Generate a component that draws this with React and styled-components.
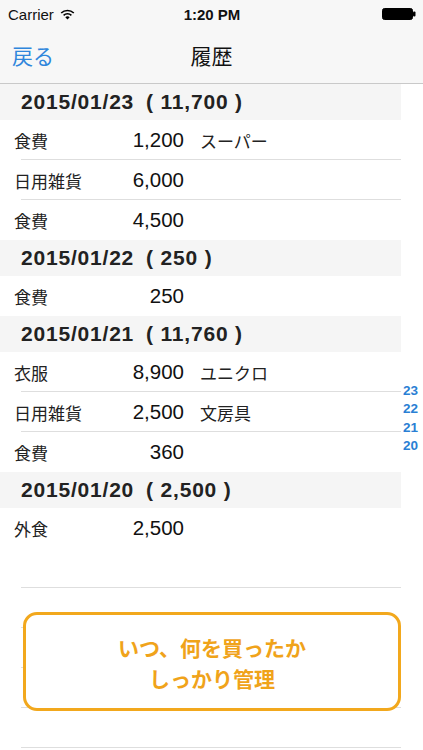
import React from "react";
import styled, { createGlobalStyle } from "styled-components";

const sections = [
  {
    date: "2015/01/23",
    total: "11,700",
    items: [
      { cat: "食費", amount: "1,200", memo: "スーパー" },
      { cat: "日用雑貨", amount: "6,000", memo: "" },
      { cat: "食費", amount: "4,500", memo: "" },
    ],
  },
  {
    date: "2015/01/22",
    total: "250",
    items: [{ cat: "食費", amount: "250", memo: "" }],
  },
  {
    date: "2015/01/21",
    total: "11,760",
    items: [
      { cat: "衣服", amount: "8,900", memo: "ユニクロ" },
      { cat: "日用雑貨", amount: "2,500", memo: "文房具" },
      { cat: "食費", amount: "360", memo: "" },
    ],
  },
  {
    date: "2015/01/20",
    total: "2,500",
    items: [{ cat: "外食", amount: "2,500", memo: "" }],
  },
];

const indexKeys = ["23", "22", "21", "20"];

export default function App() {
  return (
    <>
      <GlobalStyle />
      <Screen>
        <Header>
          <StatusBar>
            <Carrier>
              Carrier
              <svg width="15" height="11" viewBox="0 0 15 11">
                <path d="M7.5 10.5 L5.3 8.2 A3.2 3.2 0 0 1 9.7 8.2 Z" fill="#000" />
                <path d="M3.6 6.4 A5.6 5.6 0 0 1 11.4 6.4" stroke="#000" strokeWidth="1.6" fill="none" />
                <path d="M1.2 4 A9 9 0 0 1 13.8 4" stroke="#000" strokeWidth="1.6" fill="none" />
              </svg>
            </Carrier>
            <Time>1:20 PM</Time>
            <Battery>
              <svg width="34" height="12" viewBox="0 0 34 12">
                <rect x="0.5" y="0.5" width="30" height="11" rx="2" fill="#000" stroke="#000" />
                <rect x="31" y="3.5" width="2.5" height="5" rx="1" fill="#000" />
              </svg>
            </Battery>
          </StatusBar>
          <NavBar>
            <BackButton>戻る</BackButton>
            <NavTitle>履歴</NavTitle>
          </NavBar>
        </Header>

        <ListArea>
          <List>
            {sections.map((s) => (
              <React.Fragment key={s.date}>
                <SectionHeader>
                  <span>{s.date}</span>
                  <span>( {s.total} )</span>
                </SectionHeader>
                {s.items.map((it, i) => (
                  <Row key={i} $last={i === s.items.length - 1}>
                    <Category>{it.cat}</Category>
                    <Amount>{it.amount}</Amount>
                    <Memo>{it.memo}</Memo>
                  </Row>
                ))}
              </React.Fragment>
            ))}
            {[0, 1, 2, 3, 4].map((n) => (
              <Row key={"e" + n} />
            ))}
          </List>
          <IndexBar>
            {indexKeys.map((k) => (
              <IndexKey key={k}>{k}</IndexKey>
            ))}
          </IndexBar>
          <Callout>
            いつ、何を買ったか
            <br />
            しっかり管理
          </Callout>
        </ListArea>
      </Screen>
    </>
  );
}

const GlobalStyle = createGlobalStyle`
  body {
    margin: 0;
    background: #fff;
    font-family: "Liberation Sans", "Noto Sans CJK JP", sans-serif;
    color: #111;
  }
`;

const Screen = styled.div`
  width: 423px;
  height: 750px;
  overflow: hidden;
  display: flex;
  flex-direction: column;
`;

const Header = styled.div`
  background: #f7f7f7;
  border-bottom: 1px solid #c9c9c9;
  height: 84px;
  box-sizing: border-box;
  display: flex;
  flex-direction: column;
`;

const StatusBar = styled.div`
  height: 28px;
  display: grid;
  grid-template-columns: 1fr auto 1fr;
  align-items: center;
  padding: 0 7px 0 8px;
  font-size: 15px;
`;

const Carrier = styled.div`
  display: flex;
  align-items: center;
  gap: 6px;
  font-size: 15px;
`;

const Time = styled.div`
  font-weight: 700;
  font-size: 15px;
`;

const Battery = styled.div`
  display: flex;
  justify-content: flex-end;
`;

const NavBar = styled.div`
  flex: 1;
  display: grid;
  grid-template-columns: 1fr auto 1fr;
  align-items: center;
  padding: 0 12px 2px;
`;

const BackButton = styled.div`
  color: #2f86dc;
  font-size: 21px;
`;

const NavTitle = styled.div`
  font-size: 21px;
  color: #111;
`;

const ListArea = styled.div`
  flex: 1;
  position: relative;
  display: flex;
`;

const List = styled.div`
  width: 401px;
  display: flex;
  flex-direction: column;
`;

const SectionHeader = styled.div`
  height: 36px;
  flex-shrink: 0;
  background: #f5f5f5;
  display: flex;
  align-items: center;
  gap: 12px;
  padding-left: 21px;
  font-size: 21px;
  font-weight: 700;
  letter-spacing: 0.8px;
  color: #222;
`;

const Row = styled.div`
  height: 40px;
  flex-shrink: 0;
  display: flex;
  align-items: center;
  padding-left: 14px;
  background: ${(p) =>
    p.$last ? "none" : "linear-gradient(#dedede, #dedede) no-repeat 21px 100% / calc(100% - 21px) 1px"};
`;

const Category = styled.div`
  width: 98px;
  font-size: 17px;
  color: #222;
`;

const Amount = styled.div`
  width: 72px;
  text-align: right;
  font-size: 20.5px;
  color: #111;
`;

const Memo = styled.div`
  margin-left: 16px;
  font-size: 17px;
  color: #222;
`;

const IndexBar = styled.div`
  position: absolute;
  right: 5px;
  top: 298px;
  display: flex;
  flex-direction: column;
  align-items: center;
`;

const IndexKey = styled.div`
  font-size: 13.5px;
  font-weight: 700;
  line-height: 18.4px;
  color: #2a7fd4;
`;

const Callout = styled.div`
  position: absolute;
  left: 23px;
  top: 528px;
  width: 378px;
  height: 99px;
  box-sizing: border-box;
  border: 3px solid #f2a81d;
  border-radius: 14px;
  background: #fff;
  padding-top: 5px;
  display: flex;
  align-items: center;
  justify-content: center;
  text-align: center;
  color: #f0a31a;
  font-size: 21px;
  font-weight: 700;
  line-height: 31px;
`;
